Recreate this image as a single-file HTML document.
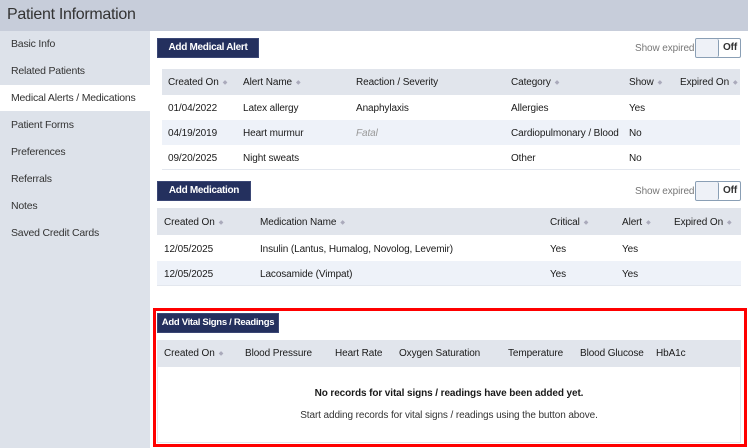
<!DOCTYPE html>
<html><head><style>
*{margin:0;padding:0;box-sizing:border-box}
body{width:748px;height:448px;overflow:hidden;background:#fff;font-family:"Liberation Sans",sans-serif;font-size:10px;letter-spacing:-0.1px;color:#1a1a1a;position:relative}
.a{position:absolute;white-space:nowrap}
#hdr{left:0;top:0;width:748px;height:31px;background:#c7cdda;font-size:16px;letter-spacing:-0.3px;color:#333;padding:6px 0 0 7px}
#side{left:0;top:31px;width:150px;height:417px;background:#dde2ea}
.si{position:absolute;left:11px;color:#333;font-size:10.5px;letter-spacing:-0.2px;white-space:nowrap}
.btn{position:absolute;background:#24305e;color:#fff;font-weight:bold;font-size:10px;letter-spacing:-0.3px;text-align:center;border:1px solid #3b4775;white-space:nowrap}
.th{position:absolute;background:#e1e5ec}
.row{position:absolute;background:#fff}
.alt{background:#eef2f9}
.s{color:#aab;font-size:6px;margin-left:4px;vertical-align:1px}
.tog{position:absolute;width:46px;height:20px;border:1px solid #8a9fb5;border-radius:2px;background:#fff}
.tog i{position:absolute;left:0;top:0;width:23px;height:18px;background:#eef1f7;border-right:1px solid #8a9fb5;border-radius:2px}
.tog b{position:absolute;left:27px;top:3px;font-size:10px;color:#333}
.se{color:#777}
</style></head><body>
<div class="a" id="hdr">Patient Information</div>
<div class="a" id="side"></div>
<div class="a" style="left:0;top:85px;width:150px;height:26px;background:#fff"></div>
<div class="si" style="top:38px">Basic Info</div>
<div class="si" style="top:65px">Related Patients</div>
<div class="si" style="top:92px">Medical Alerts / Medications</div>
<div class="si" style="top:119px">Patient Forms</div>
<div class="si" style="top:146px">Preferences</div>
<div class="si" style="top:173px">Referrals</div>
<div class="si" style="top:200px">Notes</div>
<div class="si" style="top:227px">Saved Credit Cards</div>

<div class="btn" style="left:157px;top:38px;width:102px;height:20px;line-height:18px">Add Medical Alert</div>
<div class="a se" style="left:635px;top:43px;font-size:10px">Show expired</div>
<div class="tog" style="left:695px;top:38px"><i></i><b>Off</b></div>
<div class="th" style="left:162px;top:69px;width:578px;height:26px"></div>
<div class="row" style="left:162px;top:95px;width:578px;height:25px"></div>
<div class="row alt" style="left:162px;top:120px;width:578px;height:25px"></div>
<div class="row" style="left:162px;top:145px;width:578px;height:25px;border-bottom:1px solid #e3e7ee"></div>
<div class="a" style="left:168px;top:77px">Created On<span class="s">◆</span></div>
<div class="a" style="left:243px;top:77px">Alert Name<span class="s">◆</span></div>
<div class="a" style="left:356px;top:77px">Reaction / Severity</div>
<div class="a" style="left:511px;top:77px">Category<span class="s">◆</span></div>
<div class="a" style="left:629px;top:77px">Show<span class="s">◆</span></div>
<div class="a" style="left:680px;top:77px">Expired On<span class="s">◆</span></div>
<div class="a" style="left:168px;top:103px">01/04/2022</div><div class="a" style="left:243px;top:103px">Latex allergy</div><div class="a" style="left:356px;top:103px">Anaphylaxis</div><div class="a" style="left:511px;top:103px">Allergies</div><div class="a" style="left:629px;top:103px">Yes</div>
<div class="a" style="left:168px;top:128px">04/19/2019</div><div class="a" style="left:243px;top:128px">Heart murmur</div><div class="a" style="left:356px;top:128px;color:#999;font-style:italic">Fatal</div><div class="a" style="left:511px;top:128px">Cardiopulmonary / Blood</div><div class="a" style="left:629px;top:128px">No</div>
<div class="a" style="left:168px;top:153px">09/20/2025</div><div class="a" style="left:243px;top:153px">Night sweats</div><div class="a" style="left:511px;top:153px">Other</div><div class="a" style="left:629px;top:153px">No</div>

<div class="btn" style="left:157px;top:181px;width:94px;height:20px;line-height:18px">Add Medication</div>
<div class="a se" style="left:635px;top:186px;font-size:10px">Show expired</div>
<div class="tog" style="left:695px;top:181px"><i></i><b>Off</b></div>
<div class="th" style="left:157px;top:208px;width:584px;height:27px"></div>
<div class="row" style="left:157px;top:235px;width:584px;height:26px"></div>
<div class="row alt" style="left:157px;top:261px;width:584px;height:25px;border-bottom:1px solid #e3e7ee"></div>
<div class="a" style="left:164px;top:217px">Created On<span class="s">◆</span></div>
<div class="a" style="left:260px;top:217px">Medication Name<span class="s">◆</span></div>
<div class="a" style="left:550px;top:217px">Critical<span class="s">◆</span></div>
<div class="a" style="left:622px;top:217px">Alert<span class="s">◆</span></div>
<div class="a" style="left:674px;top:217px">Expired On<span class="s">◆</span></div>
<div class="a" style="left:164px;top:244px">12/05/2025</div><div class="a" style="left:260px;top:244px">Insulin (Lantus, Humalog, Novolog, Levemir)</div><div class="a" style="left:550px;top:244px">Yes</div><div class="a" style="left:622px;top:244px">Yes</div>
<div class="a" style="left:164px;top:269px">12/05/2025</div><div class="a" style="left:260px;top:269px">Lacosamide (Vimpat)</div><div class="a" style="left:550px;top:269px">Yes</div><div class="a" style="left:622px;top:269px">Yes</div>

<div class="a" style="left:153px;top:308px;width:594px;height:139px;border:3px solid #f00"></div>
<div class="btn" style="left:157px;top:313px;width:122px;height:20px;line-height:18px;font-size:9.5px">Add Vital Signs / Readings</div>
<div class="th" style="left:157px;top:340px;width:584px;height:27px"></div>
<div class="a" style="left:157px;top:367px;width:584px;height:76px;border:1px solid #e3e7ee;border-top:none"></div>
<div class="a" style="left:164px;top:348px">Created On<span class="s">◆</span></div>
<div class="a" style="left:245px;top:348px">Blood Pressure</div>
<div class="a" style="left:335px;top:348px">Heart Rate</div>
<div class="a" style="left:399px;top:348px">Oxygen Saturation</div>
<div class="a" style="left:508px;top:348px">Temperature</div>
<div class="a" style="left:580px;top:348px">Blood Glucose</div>
<div class="a" style="left:656px;top:348px">HbA1c</div>
<div class="a" style="left:157px;top:388px;width:584px;text-align:center;font-weight:bold">No records for vital signs / readings have been added yet.</div>
<div class="a" style="left:157px;top:410px;width:584px;text-align:center;color:#333">Start adding records for vital signs / readings using the button above.</div>
</body></html>
